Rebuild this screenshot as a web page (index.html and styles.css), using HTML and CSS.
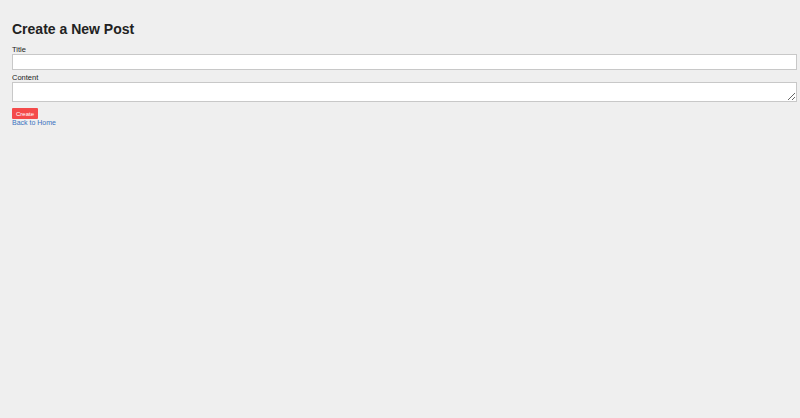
FILE: index.html
```html
<!DOCTYPE html>
<html lang="en">
<head>
  <meta charset="UTF-8">
  <title>Create a New Post</title>
  <link rel="stylesheet" href="styles.css">
</head>
<body>

<h1>Create a New Post</h1>

<form class="post-form">
  <!-- Titre -->
  <label for="title">Title</label>
  <input type="text" id="title" class="input-field" required>

  <!-- Contenu -->
  <label for="content">Content</label>
  <textarea id="content" class="input-field text-area" required></textarea>

  <button type="submit" class="btn-create">Create</button>
</form>

<a href="#" class="back-link">Back to Home</a>

</body>
</html>
```

FILE: styles.css
```css
body {
  margin: 0;
  padding: 0 12px;
  background: #efefef;
  font-family: "Liberation Sans", Arial, sans-serif;
  color: #222;
}

h1 {
  font-size: 14px;
  margin: 21px 0 8px;
  color: #222;
}

.post-form {
  display: flex;
  flex-direction: column;
  align-items: flex-start;
}

.post-form label {
  font-size: 7.5px;
  line-height: 9px;
}

.input-field {
  width: 100%;
  box-sizing: content-box;
  border: 1px solid #c8c8c8;
  background: #fff;
  padding: 0 3.5px;
  height: 14px;
  font-size: 7.5px;
  margin: 0 0 3px;
}

.text-area {
  height: 18px;
  margin-bottom: 6px;
}

.btn-create {
  background: #f44a4a;
  color: #fff;
  border: none;
  border-radius: 1px;
  font-family: inherit;
  font-size: 6px;
  padding: 2px 4px;
  height: 11px;
}

.back-link {
  display: block;
  font-size: 7px;
  line-height: 8px;
  color: #3a72c0;
  text-decoration: none;
  margin-top: 0;
}
```
